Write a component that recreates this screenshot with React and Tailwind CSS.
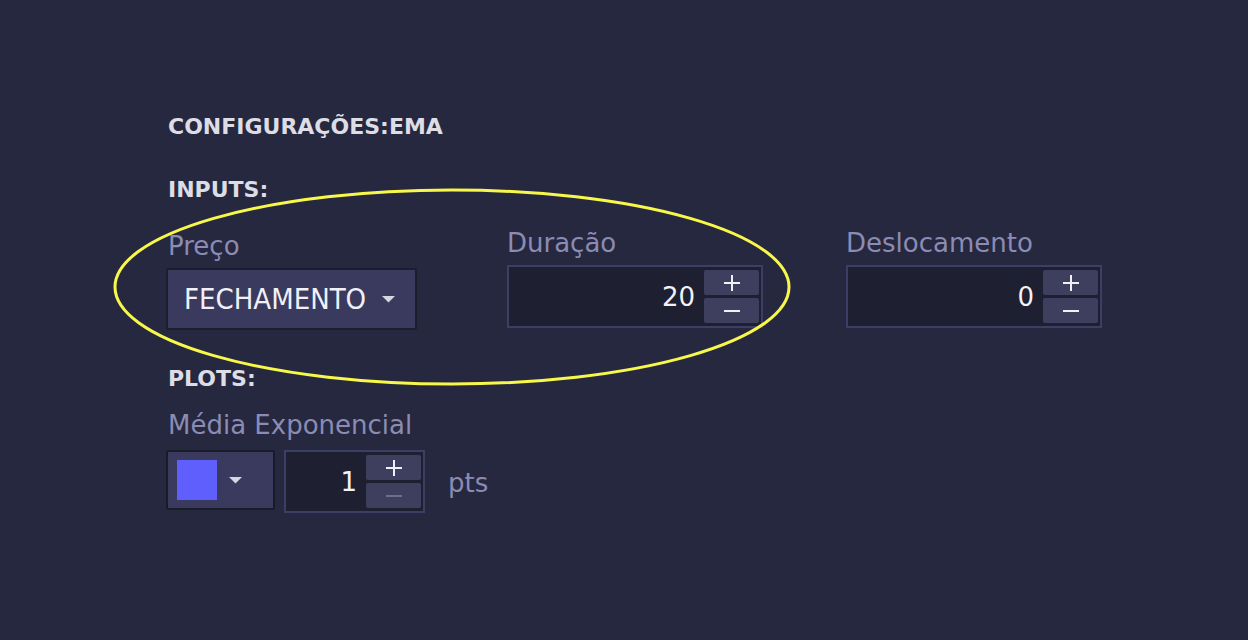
import React, { useState } from 'react';

const FONT = { fontFamily: '"DejaVu Sans", "Noto Sans", Arial, sans-serif' };

function Caret() {
  return (
    <svg width="15" height="8" viewBox="0 0 15 8">
      <path d="M1 1 L14 1 L7.5 7.5 Z" fill="#d6d6e2" />
    </svg>
  );
}

function Stepper({ value, min, onChange }) {
  const atMin = min != null && value <= min;
  return (
    <div className="flex flex-col gap-[3px]">
      <button
        onClick={() => onChange(value + 1)}
        className="w-[55px] h-[25px] bg-[#3e3f5f] rounded-[2px] flex items-center justify-center"
      >
        <svg width="18" height="18" viewBox="0 0 18 18">
          <path d="M9 1 V17 M1 9 H17" stroke="#f0f0f6" strokeWidth="2" />
        </svg>
      </button>
      <button
        onClick={() => !atMin && onChange(value - 1)}
        className="w-[55px] h-[25px] bg-[#3e3f5f] rounded-[2px] flex items-center justify-center"
      >
        <svg width="18" height="4" viewBox="0 0 18 4">
          <path d="M1 2 H17" stroke={atMin ? '#6d6e8c' : '#f0f0f6'} strokeWidth="2" />
        </svg>
      </button>
    </div>
  );
}

function NumberBox({ value, min, onChange, width }) {
  return (
    <div className={`${width} h-[63px] bg-[#1e1f30] border-2 border-[#3c3e66] flex items-center justify-end pr-[2px] gap-[9px]`}>
      <span className="text-[26px] text-[#f2f2f6] leading-none">{value}</span>
      <Stepper value={value} min={min} onChange={onChange} />
    </div>
  );
}

function Label({ children, className = 'mb-[9px]' }) {
  return <div className={`text-[26px] text-[#8b8bb3] leading-none ${className}`}>{children}</div>;
}

function Section({ children, className = '' }) {
  return (
    <div className={`text-[22px] font-bold text-[#dddde6] leading-none ${className}`}>
      {children}
    </div>
  );
}

export default function App() {
  const [duracao, setDuracao] = useState(20);
  const [desloc, setDesloc] = useState(0);
  const [pts, setPts] = useState(1);

  return (
    <div className="relative w-[1248px] h-[640px] bg-[#262840] overflow-hidden" style={FONT}>
      <div className="pl-[168px] pt-[116px]">
        <Section>CONFIGURAÇÕES:EMA</Section>
        <Section className="mt-[41px]">INPUTS:</Section>

        <div className="flex items-start mt-[29px]">
          <div className="w-[339px] pt-[3px]">
            <Label>Preço</Label>
            <button className="-ml-[2px] w-[251px] h-[62px] bg-[#393a5e] border-2 border-[#1c1d2d] rounded-[2px] flex items-center pl-[16px] gap-[15px]">
              <span className="font-['DejaVu_Sans_Condensed','DejaVu_Sans',sans-serif] font-stretch-condensed text-[29px] text-[#f0f0f6] leading-none">
                FECHAMENTO
              </span>
              <Caret />
            </button>
          </div>
          <div className="w-[339px]">
            <Label>Duração</Label>
            <NumberBox value={duracao} onChange={setDuracao} width="w-[256px]" />
          </div>
          <div>
            <Label>Deslocamento</Label>
            <NumberBox value={desloc} onChange={setDesloc} width="w-[256px]" />
          </div>
        </div>

        <Section className="mt-[38px]">PLOTS:</Section>

        <div className="mt-[22px]">
          <Label className="mb-[12px]">Média Exponencial</Label>
          <div className="flex items-start">
            <button className="-ml-[2px] w-[109px] h-[60px] bg-[#393a5e] border-2 border-[#1a1b29] rounded-[2px] flex items-center pl-[9px] gap-[11px]">
              <span className="w-[40px] h-[40px] bg-[#5f5ffd]" />
              <Caret />
            </button>
            <div className="ml-[9px]">
              <NumberBox value={pts} min={1} onChange={(v) => setPts(Math.max(1, v))} width="w-[141px]" />
            </div>
            <span className="ml-[23px] mt-[20px] text-[26px] text-[#8b8bb3] leading-none">pts</span>
          </div>
        </div>
      </div>

      {/* annotation */}
      <svg className="absolute left-0 top-0 pointer-events-none" width="1248" height="640">
        <ellipse cx="452" cy="287" rx="337" ry="97" fill="none" stroke="#f8f84a" strokeWidth="3" />
      </svg>
    </div>
  );
}
